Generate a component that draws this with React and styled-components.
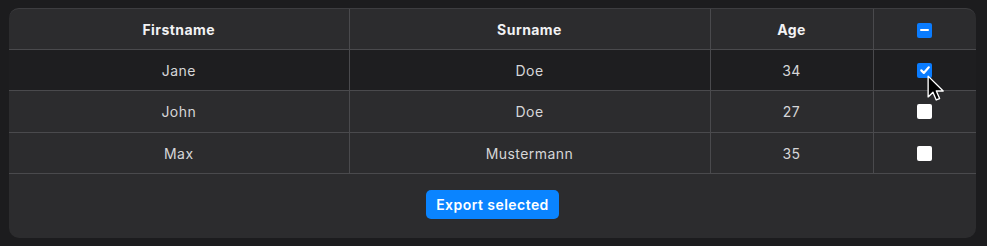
import styled, { createGlobalStyle } from 'styled-components';

const people = [
  { id: 1, firstname: 'Jane', surname: 'Doe', age: 34, checked: true, hovered: true },
  { id: 2, firstname: 'John', surname: 'Doe', age: 27, checked: false },
  { id: 3, firstname: 'Max', surname: 'Mustermann', age: 35, checked: false },
];

function Checkbox({ state }) {
  return (
    <Box $on={state !== 'off'}>
      {state === 'checked' && (
        <svg width='12' height='12' viewBox='0 0 12 12'>
          <path d='M2.3 6.4l2.5 2.5L9.8 3.3' fill='none' stroke='#fff' strokeWidth='2.2' strokeLinecap='round' strokeLinejoin='round' />
        </svg>
      )}
      {state === 'mixed' && <Dash />}
    </Box>
  );
}

function Pointer() {
  return (
    <Cursor width='18' height='27' viewBox='0 0 16 24'>
      <path d='M1 1v18.5l4.3-4.1 2.9 6.8 3-1.3-2.9-6.7h6.1z' fill='#000' stroke='#fff' strokeWidth='1.2' strokeLinejoin='round' />
    </Cursor>
  );
}

export default function App() {
  return (
    <>
      <GlobalStyle />
      <Page>
        <Card>
          <Table>
            <colgroup>
              <col style={{ width: 340 }} />
              <col style={{ width: 361 }} />
              <col style={{ width: 163 }} />
              <col />
            </colgroup>
            <thead>
              <tr>
                <Th>Firstname</Th>
                <Th>Surname</Th>
                <Th>Age</Th>
                <Th>
                  <Checkbox state='mixed' />
                </Th>
              </tr>
            </thead>
            <tbody>
              {people.map((p, i) => (
                <Row key={p.id} $hovered={p.hovered}>
                  <Td $tall={i === 1}>{p.firstname}</Td>
                  <Td>{p.surname}</Td>
                  <Td>{p.age}</Td>
                  <Td>
                    <CheckCell>
                      <Checkbox state={p.checked ? 'checked' : 'off'} />
                      {p.hovered && <Pointer />}
                    </CheckCell>
                  </Td>
                </Row>
              ))}
            </tbody>
          </Table>
          <Footer>
            <ExportButton>Export selected</ExportButton>
          </Footer>
        </Card>
      </Page>
    </>
  );
}

const GlobalStyle = createGlobalStyle`
  body {
    margin: 0;
    background: #1c1c1e;
    font-family: Inter, 'Liberation Sans', sans-serif;
    -webkit-font-smoothing: antialiased;
  }
`;

const Page = styled.div`
  padding: 8px 11px 9px 9px;
`;

const Card = styled.div`
  background: #2c2c2e;
  border-top: 1px solid #3d3d40;
  border-radius: 10px;
  overflow: hidden;
`;

const Table = styled.table`
  width: 100%;
  border-collapse: collapse;
  table-layout: fixed;
  font-size: 14px;
  letter-spacing: 0.45px;
`;

const Th = styled.th`
  height: 40px;
  padding: 0;
  text-align: center;
  font-weight: 700;
  color: #f2f2f4;
  border-bottom: 1px solid #4a4a4d;
  border-right: 1px solid #4a4a4d;
  vertical-align: middle;

  &:last-child {
    border-right: none;
  }
`;

const Row = styled.tr`
  background: ${(p) => (p.$hovered ? '#1e1e20' : 'transparent')};
`;

const Td = styled.td`
  height: ${(p) => (p.$tall ? 41 : 40)}px;
  padding: 0;
  text-align: center;
  color: #d6d6d8;
  border-bottom: 1px solid #4a4a4d;
  border-right: 1px solid #4a4a4d;
  vertical-align: middle;

  &:last-child {
    border-right: none;
  }
`;

const CheckCell = styled.div`
  position: relative;
  display: flex;
  justify-content: center;
  align-items: center;
`;

const Box = styled.span`
  display: inline-flex;
  align-items: center;
  justify-content: center;
  vertical-align: middle;
  width: 15px;
  height: 15px;
  box-sizing: border-box;
  border-radius: 2px;
  background: ${(p) => (p.$on ? '#0a7cff' : '#ffffff')};
`;

const Dash = styled.span`
  width: 9px;
  height: 2px;
  border-radius: 1px;
  background: #fff;
`;

const Cursor = styled.svg`
  position: absolute;
  left: 50%;
  top: 50%;
  margin-left: 2px;
  margin-top: 5px;
  pointer-events: none;
`;

const Footer = styled.div`
  display: flex;
  justify-content: center;
  padding: 16px 0 19px;
`;

const ExportButton = styled.button`
  height: 29px;
  padding: 0 10px;
  border: none;
  border-radius: 5px;
  background: #0a84ff;
  color: #fff;
  font-family: Inter, 'Liberation Sans', sans-serif;
  font-size: 14px;
  font-weight: 600;
  letter-spacing: 0.45px;
`;
